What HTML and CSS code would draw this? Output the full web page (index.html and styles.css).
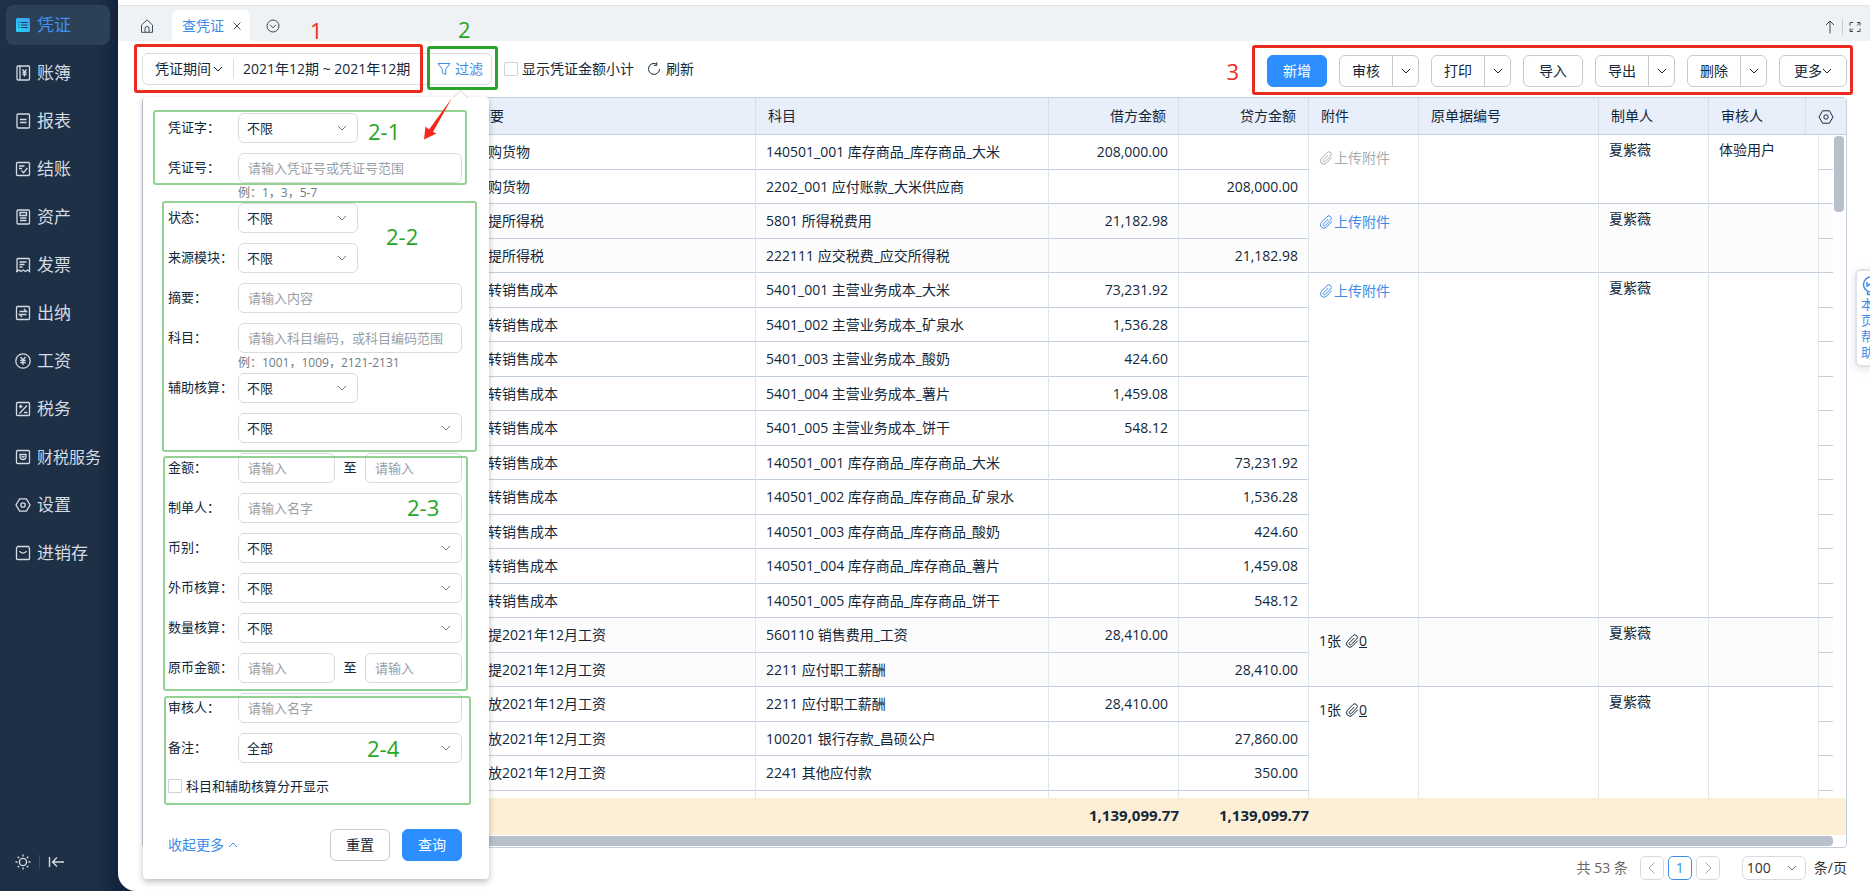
FILE: index.html
```html
<!DOCTYPE html>
<html lang="zh-CN">
<head>
<meta charset="utf-8">
<title>查凭证</title>
<link rel="stylesheet" href="styles.css">
</head>
<body>
<svg class="defs" aria-hidden="true">
  <symbol id="down" viewBox="0 0 10 10"><path d="M1 3l4 4 4-4"/></symbol>
  <symbol id="up" viewBox="0 0 10 10"><path d="M1 7l4-4 4 4"/></symbol>
  <symbol id="clip" viewBox="0 0 14 14"><path d="M12.800 6.600L7.400 12.200a3.400 3.400 0 0 1-4.900-4.900L8 1.600a2.500 2.500 0 0 1 3.600 3.500L6.300 10.500a1.200 1.200 0 0 1-1.800-1.700L9.300 4"/></symbol>
  <symbol id="gear" viewBox="0 0 16 16"><path d="M4.600 1.800h6.800L15 8l-3.600 6.200H4.600L1 8z"/><circle cx="8" cy="8" r="2.200"/></symbol>
</svg>
<div class="app">
  <nav class="side">
    <a class="nav on" href="#"><svg viewBox="0 0 16 16"><defs><linearGradient id="g" x2="1" y2="0" y1="1"><stop stop-color="#25d5f5"/><stop offset="1" stop-color="#3d9cf0"/></linearGradient></defs><rect x="1" y="1" width="14" height="14" rx="1.500" fill="url(#g)" stroke="none"/><path d="M3.500 5.500h1M6 5.500h6.500M3.500 8h1M6 8h6.500M3.500 10.500h1M6 10.500h6.500" stroke="#1d3a5a" stroke-width="1"/></svg>凭证</a>
    <a class="nav" href="#"><svg viewBox="0 0 16 16"><rect x="2" y="1" width="12.500" height="14" rx="1"/><path d="M5 1v14M7.500 4.500l2 2.500 2-2.500M9.500 7v4.500M7.500 7.500h4M7.500 9.500h4"/></svg>账簿</a>
    <a class="nav" href="#"><svg viewBox="0 0 16 16"><rect x="2" y="1" width="12.500" height="14" rx="1"/><path d="M5 6.500h6.500M5 9.500h6.500"/></svg>报表</a>
    <a class="nav" href="#"><svg viewBox="0 0 16 16"><path d="M14.500 7V2.500a1 1 0 0 0-1-1h-11a1 1 0 0 0-1 1v11a1 1 0 0 0 1 1h11a1 1 0 0 0 1-1V7M4 5h5.500M4 7.500h3M6.500 9.500l2 2.200 4-4.700"/></svg>结账</a>
    <a class="nav" href="#"><svg viewBox="0 0 16 16"><rect x="2" y="1" width="12.500" height="14" rx="1"/><path d="M5 3.500h6.500v3H5zM5 9h6.500M5 11.500h6.500"/></svg>资产</a>
    <a class="nav" href="#"><svg viewBox="0 0 16 16"><path d="M1 14.500h1V2.500a1 1 0 0 1 1-1h10.500a1 1 0 0 1 1 1v12l-2-1.500-2 1.500-2.300-1.500-2.200 1.500-2-1.500-2 1.500M4.500 5h7M4.500 7.500h5M4.500 10h3"/></svg>发票</a>
    <a class="nav" href="#"><svg viewBox="0 0 16 16"><rect x="1.500" y="1.500" width="13" height="13" rx="1"/><path d="M4.500 6.500h7L9 4M11.500 9.500h-7L7 12"/></svg>出纳</a>
    <a class="nav" href="#"><svg viewBox="0 0 16 16"><circle cx="8" cy="8" r="7.200"/><path d="M5.500 4L8 7l2.500-3M8 7v5M5.300 7.300h5.400M5.300 9.500h5.400"/></svg>工资</a>
    <a class="nav" href="#"><svg viewBox="0 0 16 16"><rect x="1.500" y="1.500" width="13" height="13" rx="1"/><path d="M4 5.500h3.500M5.700 3.800v3.400M12 4.500l-7.500 8M9 11.500h3.500"/></svg>税务</a>
    <a class="nav long" href="#"><svg viewBox="0 0 16 16"><rect x="1.500" y="1.500" width="13" height="13" rx="1"/><path d="M5 5.500h6v2a3 3 0 0 1-6 0zM6.500 7.200L8 8.300l1.500-1.100"/></svg>财税服务</a>
    <a class="nav" href="#"><svg><use href="#gear"/></svg>设置</a>
    <a class="nav" href="#"><svg viewBox="0 0 16 16"><path d="M2.500 1.500h11l1 2v10a1 1 0 0 1-1 1h-11a1 1 0 0 1-1-1v-10zM4.500 6c1.500 2.700 5.500 2.700 7 0"/></svg>进销存</a>
    <div class="side-foot">
      <button aria-label="主题"><svg viewBox="0 0 16 16"><circle cx="8" cy="8" r="3.600"/><path d="M8 .5v2M8 13.500v2M.5 8h2M13.500 8h2M2.700 2.700l1.400 1.400M11.900 11.900l1.400 1.400M2.700 13.300l1.400-1.400M11.900 4.100l1.400-1.400"/></svg></button>
      <i></i>
      <button aria-label="收起菜单"><svg viewBox="0 0 16 16"><path d="M1.500 3v10M4.500 8H16M9 3.500L4.500 8 9 12.500"/></svg></button>
    </div>
  </nav>

  <main class="main">
    <div class="tabs">
      <a class="tab home" href="#" aria-label="首页"><svg viewBox="0 0 14 14"><path d="M1.500 6v7.300h11V6L7 .9zM5 13V9.500a2 2 0 0 1 4 0V13"/></svg></a>
      <a class="tab on" href="#">查凭证<svg viewBox="0 0 10 10"><path d="M1.500 1.500l7 7M8.500 1.500l-7 7"/></svg></a>
      <a class="tab all" href="#" aria-label="全部标签"><svg viewBox="0 0 14 14"><circle cx="7" cy="7" r="6"/><path d="M4.200 6L7 8.700 9.800 6"/></svg></a>
      <div class="tab-tools">
        <button aria-label="向上"><svg viewBox="0 0 14 14"><path d="M7 13.500V1M3 5l4-4 4 4"/></svg></button>
        <i></i>
        <button aria-label="全屏"><svg viewBox="0 0 14 14"><path d="M2 5.500V2.500h3M9 2.500h3v3M12 8.500v3H9M5 11.500H2v-3M9 5.500l2.500-2.500M5 8.500L2.500 11"/></svg></button>
      </div>
    </div>

    <div class="toolbar">
      <div class="query">
        <button class="period">凭证期间<svg><use href="#down"/></svg></button>
        <button class="dates">2021年12期 ~ 2021年12期</button>
        <button class="filter"><svg viewBox="0 0 14 14"><path d="M1 1.500h12L8.700 7.200v5.300l-3.400-1.700V7.200z"/></svg>过滤</button>
      </div>
      <label class="check big"><input type="checkbox">显示凭证金额小计</label>
      <button class="refresh"><svg viewBox="0 0 14 14"><path d="M9.500 2A5.500 5.500 0 1 0 12.500 7M9.800.3v3H7"/></svg>刷新</button>
      <div class="actions">
        <button class="btn primary">新增</button>
        <div class="split"><button>审核</button><button aria-label="审核选项"><svg><use href="#down"/></svg></button></div>
        <div class="split"><button>打印</button><button aria-label="打印选项"><svg><use href="#down"/></svg></button></div>
        <button class="btn">导入</button>
        <div class="split"><button>导出</button><button aria-label="导出选项"><svg><use href="#down"/></svg></button></div>
        <div class="split"><button>删除</button><button aria-label="删除选项"><svg><use href="#down"/></svg></button></div>
        <button class="btn more">更多<svg><use href="#down"/></svg></button>
      </div>

      <form class="pop">
        <div class="row"><label for="f1">凭证字：</label><span class="sel short"><select id="f1"><option>不限</option></select><svg><use href="#down"/></svg></span></div>
        <div class="row hinted"><label for="f2">凭证号：</label><input id="f2" placeholder="请输入凭证号或凭证号范围"></div>
        <p class="hint">例：1，3，5-7</p>
        <div class="row"><label for="f3">状态：</label><span class="sel short"><select id="f3"><option>不限</option></select><svg><use href="#down"/></svg></span></div>
        <div class="row"><label for="f4">来源模块：</label><span class="sel short"><select id="f4"><option>不限</option></select><svg><use href="#down"/></svg></span></div>
        <div class="row"><label for="f5">摘要：</label><input id="f5" placeholder="请输入内容"></div>
        <div class="row hinted"><label for="f6">科目：</label><input id="f6" placeholder="请输入科目编码，或科目编码范围"></div>
        <p class="hint">例：1001，1009，2121-2131</p>
        <div class="row"><label for="f7">辅助核算：</label><span class="sel short"><select id="f7"><option>不限</option></select><svg><use href="#down"/></svg></span></div>
        <div class="row"><label></label><span class="sel"><select aria-label="辅助核算项目"><option>不限</option></select><svg><use href="#down"/></svg></span></div>
        <div class="row"><label for="f8">金额：</label><input id="f8" placeholder="请输入"><span class="to">至</span><input aria-label="金额上限" placeholder="请输入"></div>
        <div class="row"><label for="f9">制单人：</label><input id="f9" placeholder="请输入名字"></div>
        <div class="row"><label for="f10">币别：</label><span class="sel"><select id="f10"><option>不限</option></select><svg><use href="#down"/></svg></span></div>
        <div class="row"><label for="f11">外币核算：</label><span class="sel"><select id="f11"><option>不限</option></select><svg><use href="#down"/></svg></span></div>
        <div class="row"><label for="f12">数量核算：</label><span class="sel"><select id="f12"><option>不限</option></select><svg><use href="#down"/></svg></span></div>
        <div class="row"><label for="f13">原币金额：</label><input id="f13" placeholder="请输入"><span class="to">至</span><input aria-label="原币金额上限" placeholder="请输入"></div>
        <div class="row"><label for="f14">审核人：</label><input id="f14" placeholder="请输入名字"></div>
        <div class="row"><label for="f15">备注：</label><span class="sel"><select id="f15"><option>全部</option></select><svg><use href="#down"/></svg></span></div>
        <label class="check"><input type="checkbox">科目和辅助核算分开显示</label>
        <div class="pop-foot">
          <a href="#">收起更多<svg><use href="#up"/></svg></a>
          <button type="reset" class="btn">重置</button>
          <button type="button" class="btn primary">查询</button>
        </div>
      </form>
    </div>

    <section class="grid">
      <table class="head">
        <colgroup><col class="c0"><col class="c1"><col class="c2"><col class="c3"><col class="c3"><col class="c4"><col class="c5"><col class="c4"><col class="c6"><col class="c7"></colgroup>
        <thead><tr><th></th><th>摘要</th><th>科目</th><th class="r">借方金额</th><th class="r">贷方金额</th><th>附件</th><th>原单据编号</th><th>制单人</th><th>审核人</th><th class="set"><button aria-label="列设置"><svg><use href="#gear"/></svg></button></th></tr></thead>
      </table>
      <div class="body">
        <table>
          <colgroup><col class="c0"><col class="c1"><col class="c2"><col class="c3"><col class="c3"><col class="c4"><col class="c5"><col class="c4"><col class="c8"><col class="c9"></colgroup>
          <tbody>
            <tr><td rowspan="2"></td><td>采购货物</td><td>140501_001 库存商品_库存商品_大米</td><td class="r">208,000.00</td><td></td><td class="m" rowspan="2"><a class="up off" href="#"><svg><use href="#clip"/></svg>上传附件</a></td><td rowspan="2"></td><td class="m" rowspan="2">夏紫薇</td><td class="m" rowspan="2">体验用户</td><td></td></tr>
            <tr><td>采购货物</td><td>2202_001 应付账款_大米供应商</td><td></td><td class="r">208,000.00</td><td></td></tr>
          </tbody>
          <tbody>
            <tr><td rowspan="2"></td><td>计提所得税</td><td>5801 所得税费用</td><td class="r">21,182.98</td><td></td><td class="m" rowspan="2"><a class="up" href="#"><svg><use href="#clip"/></svg>上传附件</a></td><td rowspan="2"></td><td class="m" rowspan="2">夏紫薇</td><td rowspan="2"></td><td></td></tr>
            <tr><td>计提所得税</td><td>222111 应交税费_应交所得税</td><td></td><td class="r">21,182.98</td><td></td></tr>
          </tbody>
          <tbody>
            <tr><td rowspan="10"></td><td>结转销售成本</td><td>5401_001 主营业务成本_大米</td><td class="r">73,231.92</td><td></td><td class="m" rowspan="10"><a class="up" href="#"><svg><use href="#clip"/></svg>上传附件</a></td><td rowspan="10"></td><td class="m" rowspan="10">夏紫薇</td><td rowspan="10"></td><td></td></tr>
            <tr><td>结转销售成本</td><td>5401_002 主营业务成本_矿泉水</td><td class="r">1,536.28</td><td></td><td></td></tr>
            <tr><td>结转销售成本</td><td>5401_003 主营业务成本_酸奶</td><td class="r">424.60</td><td></td><td></td></tr>
            <tr><td>结转销售成本</td><td>5401_004 主营业务成本_薯片</td><td class="r">1,459.08</td><td></td><td></td></tr>
            <tr><td>结转销售成本</td><td>5401_005 主营业务成本_饼干</td><td class="r">548.12</td><td></td><td></td></tr>
            <tr><td>结转销售成本</td><td>140501_001 库存商品_库存商品_大米</td><td></td><td class="r">73,231.92</td><td></td></tr>
            <tr><td>结转销售成本</td><td>140501_002 库存商品_库存商品_矿泉水</td><td></td><td class="r">1,536.28</td><td></td></tr>
            <tr><td>结转销售成本</td><td>140501_003 库存商品_库存商品_酸奶</td><td></td><td class="r">424.60</td><td></td></tr>
            <tr><td>结转销售成本</td><td>140501_004 库存商品_库存商品_薯片</td><td></td><td class="r">1,459.08</td><td></td></tr>
            <tr><td>结转销售成本</td><td>140501_005 库存商品_库存商品_饼干</td><td></td><td class="r">548.12</td><td></td></tr>
          </tbody>
          <tbody>
            <tr><td rowspan="2"></td><td>计提2021年12月工资</td><td>560110 销售费用_工资</td><td class="r">28,410.00</td><td></td><td class="m" rowspan="2"><span class="cnt">1张 <a href="#"><svg><use href="#clip"/></svg><u>0</u></a></span></td><td rowspan="2"></td><td class="m" rowspan="2">夏紫薇</td><td rowspan="2"></td><td></td></tr>
            <tr><td>计提2021年12月工资</td><td>2211 应付职工薪酬</td><td></td><td class="r">28,410.00</td><td></td></tr>
          </tbody>
          <tbody>
            <tr><td rowspan="4"></td><td>发放2021年12月工资</td><td>2211 应付职工薪酬</td><td class="r">28,410.00</td><td></td><td class="m" rowspan="4"><span class="cnt">1张 <a href="#"><svg><use href="#clip"/></svg><u>0</u></a></span></td><td rowspan="4"></td><td class="m" rowspan="4">夏紫薇</td><td rowspan="4"></td><td></td></tr>
            <tr><td>发放2021年12月工资</td><td>100201 银行存款_昌硕公户</td><td></td><td class="r">27,860.00</td><td></td></tr>
            <tr><td>发放2021年12月工资</td><td>2241 其他应付款</td><td></td><td class="r">350.00</td><td></td></tr>
            <tr><td></td><td></td><td></td><td></td><td></td></tr>
          </tbody>
        </table>
        <div class="vbar"><i></i></div>
      </div>
      <table class="sum">
        <colgroup><col class="c0"><col class="c1"><col class="c2"><col class="c3"><col class="c3"><col class="c4"><col class="c5"><col class="c4"><col class="c6"><col class="c7"></colgroup>
        <tbody><tr><td></td><td></td><td></td><td>1,139,099.77</td><td>1,139,099.77</td><td></td><td></td><td></td><td></td><td></td></tr></tbody>
      </table>
      <div class="hbar"><i></i></div>
    </section>

    <div class="pager">
      <span class="count">共 53 条</span>
      <button class="pg" aria-label="上一页"><svg viewBox="0 0 14 14"><path d="M9.500 1.500L4 7l5.500 5.500"/></svg></button>
      <button class="pg on">1</button>
      <button class="pg" aria-label="下一页"><svg viewBox="0 0 14 14"><path d="M4.500 1.500L10 7l-5.500 5.500"/></svg></button>
      <span class="sel size"><select id="size"><option>100</option></select><svg><use href="#down"/></svg></span>
      <label for="size">条/页</label>
    </div>
  </main>

  <a class="help" href="#"><svg viewBox="0 0 20 20"><circle cx="10" cy="8.500" r="7.500"/><path d="M6 6v4l3-2 3 2M6.500 15.500v3h7v-3"/></svg>本<br>页<br>帮<br>助</a>

  <div class="mark red m1"></div><b class="tag red t1">1</b>
  <div class="mark green m2"></div><b class="tag t2">2</b>
  <div class="mark red m3"></div><b class="tag red t3">3</b>
  <div class="mark soft s1"></div><b class="tag u1">2-1</b>
  <div class="mark soft s2"></div><b class="tag u2">2-2</b>
  <div class="mark soft s3"></div><b class="tag u3">2-3</b>
  <div class="mark soft s4"></div><b class="tag u4">2-4</b>
  <svg class="arrow" viewBox="0 0 28 42"><path d="M28 0L9 34l3.500 1.500L0 41.500 1.500 28.500 5 31.500z"/></svg>
</div>
</body>
</html>
```
FILE: styles.css
```css
* { box-sizing: border-box; }
body { margin: 0; font: 14px/20px "Open Sans", "Noto Sans CJK SC", sans-serif; color: #12283a; overflow: hidden; background: #1d3045; }
button, input, select { font: inherit; color: inherit; margin: 0; padding: 0; border: 0; background: none; outline: 0; }
a { color: inherit; text-decoration: none; }
svg { fill: none; stroke: currentColor; width: 14px; height: 14px; flex: none; }
.defs { position: absolute; width: 0; height: 0; }
.app { position: relative; display: flex; height: 100vh; }

.side { width: 118px; flex: none; display: flex; flex-direction: column; gap: 8px; padding: 5px 8px 14px 6px; color: #d5dbe2; background: linear-gradient(90deg, #1d3045 96px, #14233c 118px); box-shadow: 16px 0 #14233c; }
.nav { display: flex; align-items: center; gap: 6px; height: 40px; padding-left: 9px; border-radius: 8px; font-size: 17px; white-space: nowrap; }
.nav svg { width: 16px; height: 16px; stroke-width: 1.3; }
.nav.on { color: #3d8ff0; background: #2d4156; }
.nav.long { font-size: 16px; }
.side-foot { margin-top: auto; display: flex; align-items: center; gap: 8px; padding-left: 9px; height: 30px; }
.side-foot svg { display: block; width: 16px; height: 16px; stroke-width: 1.4; }
.side-foot i { width: 1px; height: 14px; background: #3a4c60; }

.main { position: relative; flex: 1; min-width: 0; display: flex; flex-direction: column; background: #fff; border-bottom-left-radius: 18px; padding-top: 5px; }
.tabs { display: flex; align-items: flex-end; flex: none; height: 36px; background: #eff2f5; border-top: 1px solid #e2e5e8; padding: 0 8px 0 22px; color: #3c4a58; }
.tab { display: flex; align-items: center; height: 31px; }
.home { width: 32px; }
.tab.on { color: #3d8de8; background: #fff; border-radius: 6px 6px 0 0; padding: 0 8px 0 10px; gap: 8px; height: 31px; }
.tab.on svg { width: 10px; height: 10px; color: #555; }
.all { margin-left: 16px; }
.tab-tools { margin-left: auto; align-self: center; display: flex; align-items: center; gap: 5px; padding-top: 6px; }
.tab-tools svg { display: block; }
.tab-tools i { width: 1px; height: 16px; background: #c9ced4; }

.toolbar { position: relative; z-index: 2; flex: none; display: flex; align-items: flex-start; height: 56px; padding: 12px 23px 0 24px; }
.query { display: flex; align-items: center; height: 32px; width: 350px; border: 1px solid #dcdcdc; border-radius: 6px; }
.query button { display: flex; align-items: center; height: 20px; white-space: nowrap; }
.query .period { gap: 2px; padding: 0 10px 0 12px; border-right: 1px solid #dcdcdc; }
.query .dates { padding-left: 9px; }
.query .filter { margin-left: auto; padding-right: 8px; gap: 4px; color: #3d8de8; }
svg:has(use[href="#down"]), svg:has(use[href="#up"]) { width: 10px; height: 10px; }
.check { display: flex; align-items: center; gap: 4px; }
.check input { appearance: none; width: 14px; height: 14px; border: 1px solid #d0d3d6; border-radius: 1px; background: #fff; }
.check.big { height: 32px; margin-left: 12px; }
.refresh { display: flex; align-items: center; gap: 5px; height: 32px; margin-left: 13px; }
.actions { margin-left: auto; display: flex; gap: 12px; padding-top: 2px; }
.btn { width: 60px; height: 32px; border: 1px solid #c8cbce; border-radius: 6px; background: #fff; }
.btn.primary { color: #fff; background: #2d8fff; border-color: #2d8fff; }
.btn.more { width: 68px; }
.split { display: flex; width: 80px; height: 32px; border: 1px solid #c8cbce; border-radius: 6px; }
.split button { flex: 1; }
.split button + button { flex: none; width: 26px; border-left: 1px solid #c8cbce; }

.pop { position: absolute; left: 25px; top: 56px; width: 346px; padding: 16px 27px 18px 25px; font-size: 13px; background: #fff; border-radius: 4px; box-shadow: 0 3px 6px rgba(0,0,0,.25); }
.pop::before { content: ""; position: absolute; left: 312px; top: -5px; width: 10px; height: 10px; background: #fff; border: solid #ddd; border-width: 1px 0 0 1px; transform: rotate(45deg); }
.row { display: flex; margin-bottom: 10px; height: 30px; line-height: 28px; white-space: nowrap; }
.row.hinted { margin-bottom: 0; }
.row > label { flex: none; width: 70px; }
.row input { flex: 1; min-width: 0; height: 30px; border: 1px solid #d9dbdd; border-radius: 6px; padding: 0 9px; background: #fff; }
.row input::placeholder { color: #98a0a8; }
.row .to { width: 30px; text-align: center; }
.sel { position: relative; flex: 1; height: 30px; }
.sel.short { flex: none; width: 120px; }
.sel select { appearance: none; width: 100%; height: 100%; border: 1px solid #d9dbdd; border-radius: 6px; padding: 0 8px; background: #fff; }
.sel svg { position: absolute; right: 11px; top: 10px; color: #6d7780; pointer-events: none; }
.hint { margin: 0; padding-left: 70px; height: 20px; font-size: 12px; color: #6f7a84; }
.pop .check { height: 26px; }
.pop-foot { display: flex; align-items: center; gap: 12px; padding-top: 30px; font-size: 14px; }
.pop-foot a { display: flex; align-items: center; gap: 4px; margin-right: auto; color: #3d8de8; }

.grid { flex: 1; min-height: 0; display: flex; flex-direction: column; margin: 0 23px 0 24px; border: 1px solid #c3cfdd; border-radius: 4px; overflow: hidden; }
table { table-layout: fixed; width: 100%; border-collapse: separate; border-spacing: 0; flex: none; }
.c0 { width: 321px; }
.c2 { width: 293px; }
.c3 { width: 130px; }
.c4 { width: 110px; }
.c5 { width: 180px; }
.c6 { width: 97px; }
.c7 { width: 40px; }
.c8 { width: 110px; }
.c9 { width: 14px; }
th { height: 37px; padding: 0 12px; text-align: left; font-weight: 400; background: #e9effa; border-right: 1px solid #d5deea; border-bottom: 1px solid #c3cfdd; }
th.r { text-align: right; }
th.set { padding: 0; text-align: center; border-right: 0; }
th svg { display: block; width: 16px; height: 16px; }
th button { vertical-align: middle; }
.body { flex: 1; min-height: 0; display: flex; overflow: hidden; }
.body table { flex: 1; width: auto; align-self: flex-start; }
.body td { padding: 0 10px; white-space: nowrap; border-right: 1px solid #dfe6ef; border-bottom: 1px solid #c3cfdd; overflow: hidden; }
.body td:last-child { border-right: 0; padding: 0; }
.body tr:nth-child(odd) td { height: 35px; }
.body tr:nth-child(even) td { height: 34px; }
.body tbody:nth-of-type(even) { background: #fcfcfc; }
.body td.r { text-align: right; }
.body td.m { vertical-align: top; padding-top: 5px; }
.up { display: flex; align-items: center; gap: 1px; padding-top: 3px; color: #3d8de8; }
.up.off { padding-top: 8px; color: #a8adb2; }
.cnt { display: flex; align-items: center; gap: 4px; padding-top: 8px; }
.cnt a { display: flex; align-items: center; }
.vbar { width: 13px; flex: none; padding: 1px 2px 0 1px; }
.vbar i { display: block; height: 76px; border-radius: 4px; background: #b8c0cc; }
.sum td { height: 37px; padding: 0 0 3px; text-align: right; font-size: 15px; font-weight: 700; background: #fdefd5; }
.hbar { flex: none; height: 12px; padding: 1px 13px 1px 0; }
.hbar i { display: block; height: 10px; background: #b8c0cc; border-radius: 4px; }

.pager { flex: none; display: flex; align-items: center; height: 43px; padding: 0 23px 3px 0; justify-content: flex-end; gap: 4px; color: #333; }
.count { margin-right: 8px; color: #666; }
.pg { display: flex; align-items: center; justify-content: center; width: 24px; height: 24px; border: 1px solid #d9d9d9; border-radius: 5px; color: #aaa; }
.pg.on { border-color: #3d8de8; color: #3d8de8; }
.size { flex: none; width: 64px; height: 24px; margin: 0 4px 0 18px; }
.size select { padding: 0 4px; }
.size svg { top: 7px; right: 9px; }

.help { position: absolute; z-index: 3; left: calc(100% - 15px); top: 269px; width: 30px; height: 98px; padding: 5px 0 0 4px; font-size: 13px; line-height: 16px; color: #3d8de8; background: #fff; border: 2px solid #dfe2e6; border-radius: 6px; box-shadow: 0 2px 8px rgba(0,0,0,.12); }
.help svg { display: block; width: 20px; height: 20px; stroke-width: 1.5; }

.mark, .tag, .arrow { position: absolute; z-index: 4; pointer-events: none; }
.mark { border: 3px solid #27a527; border-radius: 3px; }
.mark.red { border-color: #ec2b20; }
.mark.soft { border: 2px solid rgba(39,165,39,.5); }
.tag { font-size: 22px; line-height: 30px; font-weight: 400; color: #27a527; }
.tag.red { color: #ec2b20; }
.m1 { left: 134px; top: 44px; width: 289px; height: 49px; }
.m2 { left: 427px; top: 46px; width: 71px; height: 44px; }
.m3 { right: 17px; top: 45px; width: 601px; height: 50px; }
.s1 { left: 153px; top: 110px; width: 314px; height: 75px; }
.s2 { left: 162px; top: 201px; width: 315px; height: 251px; }
.s3 { left: 163px; top: 456px; width: 305px; height: 235px; }
.s4 { left: 164px; top: 696px; width: 307px; height: 109px; }
.t1 { left: 310px; top: 15px; }
.t2 { left: 458px; top: 14px; }
.t3 { right: 631px; top: 56px; }
.u1 { left: 368px; top: 116px; }
.u2 { left: 386px; top: 221px; }
.u3 { left: 407px; top: 492px; }
.u4 { left: 367px; top: 733px; }
.arrow { left: 424px; top: 98px; width: 28px; height: 42px; fill: #f5281c; stroke: none; }
```
